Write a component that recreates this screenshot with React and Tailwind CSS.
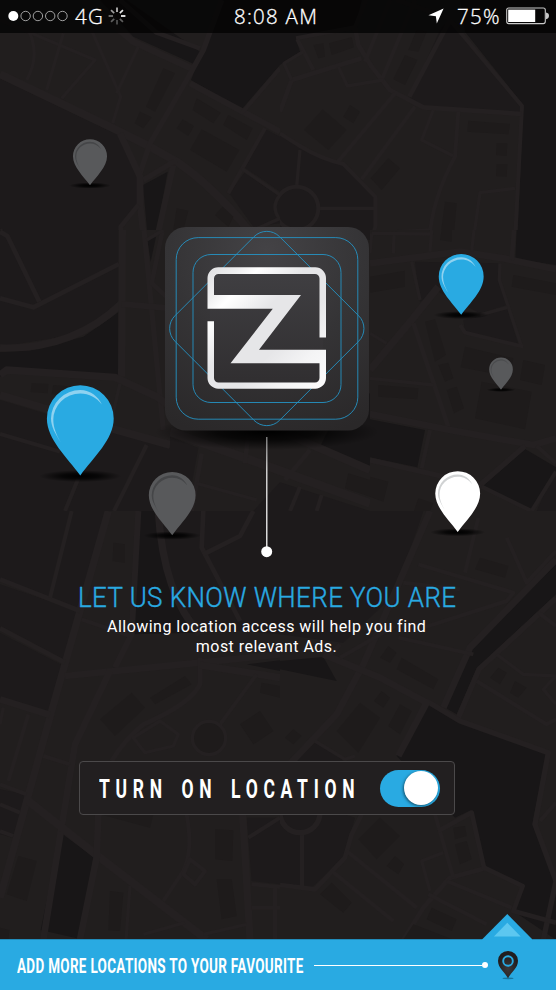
const DARK = "#1d1a1b";
const DEEP = "#181617";
const LOT = "#1e1b1b";
const BLOCK = "#211e1e";
const ROAD = "#242021";

// One rectangular sheet of the street map; its drawing units are thirds of a pixel.
function Sheet({ x, y, w, h, dark = [], deep = [], roads = [], lots = [], children }) {
  return (
    <svg x={x} y={y} width={w} height={h} viewBox={`0 0 ${w * 3} ${h * 3}`}>
      <rect width={w * 3} height={h * 3} fill={BLOCK} />
      {dark.map((p) => <polygon key={p} points={p} fill={DARK} />)}
      {deep.map((p) => <polygon key={p} points={p} fill={DEEP} />)}
      {roads.map(([width, d]) => (
        <path key={d} d={d} fill="none" stroke={ROAD} strokeWidth={width} strokeLinejoin="round" />
      ))}
      {lots.map((p) => <polygon key={p} points={p} fill={LOT} />)}
      {children}
    </svg>
  );
}

function StreetMap() {
  return (
    <>
      <Sheet
        x={0} y={0} w={280} h={240}
        dark={[
          "0,235 355,405 410,520 410,615 360,680 360,720 0,720",
          "798,388 840,410 840,575 735,503",
          "733,518 840,590 840,670 760,680 688,580",
        ]}
        deep={[
          "300,0 380,0 600,155 583,193 400,110",
          "668,0 840,0 840,195 725,328 573,240",
          "429,555 503,515 470,695 443,710",
        ]}
        roads={[
          [24, "M0 222 L350 390 L450 440 L530 485 Q640 560 745 690"],
          [20, "M250 0 L400 125 L580 208"],
          [14, "M360 0 L470 98 L600 145"],
          [16, "M665 0 L610 150 L560 240 L450 430 L420 520"],
          [18, "M570 250 L840 395"],
          [12, "M840 205 L725 340"],
          [10, "M0 60 L285 180 L185 295"],
          [10, "M190 100 L140 270"],
          [10, "M80 80 Q125 160 80 240"],
          [10, "M270 80 L362 290 L338 370"],
          [10, "M415 140 L350 280"],
          [12, "M795 385 L685 580"],
          [10, "M725 505 L840 585 Q810 620 840 660"],
          [20, "M360 400 L420 530 L420 610 L432 720"],
          [18, "M520 495 L470 720"],
          [14, "M415 615 L362 680 L362 720"],
          [16, "M430 540 L530 480"],
          [10, "M740 700 L840 655"],
          [12, "M0 690 L30 715"],
        ]}
        lots={[
          "490,205 525,220 465,335 438,320",
          "420,335 455,352 430,385 404,370",
          "590,295 662,338 640,370 578,330",
          "548,358 582,378 565,408 530,385",
          "605,388 718,450 680,515 570,450",
          "685,345 758,385 740,420 670,375",
          "530,625 565,632 550,690 520,690",
          "668,620 700,650 685,680 645,645",
        ]}
      />
      <Sheet
        x={280} y={0} w={276} h={240}
        dark={[
          "480,90 508,60 725,320 720,335 440,320 388,295",
          "0,405 55,440 130,475 190,495 285,590 285,720 0,720",
        ]}
        deep={[
          "0,0 245,0 225,85 48,118 60,155 0,195",
          "540,0 828,0 828,720 712,720 730,315 555,95",
        ]}
        roads={[
          [12, "M0 400 L60 438 Q120 475 190 492 L286 590 L286 680 L275 720"],
          [12, "M48 115 L225 82 L258 0"],
          [12, "M510 60 L726 318 L705 720"],
          [14, "M510 60 L388 290"],
          [14, "M225 80 L235 135 L275 200 L330 270 L430 322 L725 342"],
          [12, "M330 0 L255 185"],
          [12, "M405 0 L305 240"],
          [12, "M52 118 L100 210"],
          [14, "M0 335 L35 240 L245 175"],
          [10, "M35 240 L12 190 L70 155"],
          [12, "M345 280 L170 490"],
          [12, "M405 320 L245 538"],
          [10, "M175 200 L202 258 L310 240"],
          [10, "M460 330 L425 420 L520 468"],
          [12, "M535 335 L525 470 Q455 600 448 720"],
          [10, "M705 565 L600 578 L580 720"],
          [10, "M295 698 L450 690"],
          [10, "M60 450 L50 560 M115 625 L285 625"],
          [12, "M350 0 L510 55"],
        ]}
        lots={[
          "128,328 200,390 145,450 72,390",
          "210,315 240,335 220,370 190,350",
          "325,475 360,505 305,570 272,535",
          "565,362 690,372 685,403 562,395",
          "650,430 682,430 680,468 648,465",
          "650,492 682,492 680,530 648,528",
          "495,605 530,610 520,720 480,720",
          "100,135 130,130 135,170 115,175",
          "147,130 215,112 222,142 155,165",
          "375,165 412,180 375,255 340,238",
          "410,90 440,95 415,155 385,150",
        ]}
      >
        <circle cx="50" cy="625" r="65" fill={DARK} stroke={ROAD} strokeWidth="12" />
      </Sheet>
      <Sheet
        x={0} y={230} w={170} h={281}
        dark={[
          "0,0 357,0 357,215 250,310 0,350",
          "0,510 150,555 510,655 510,843 0,843",
        ]}
        deep={[
          "0,365 90,362 250,320 357,245 360,440 18,412 0,440",
          "442,30 468,20 452,95",
        ]}
        roads={[
          [22, "M0 354 Q220 360 365 220"],
          [22, "M367 0 L365 440"],
          [16, "M432 0 L490 600"],
          [18, "M365 222 L510 235"],
          [14, "M0 205 L100 232 L357 102"],
          [14, "M0 5 L22 18 L118 215"],
          [22, "M0 435 L20 420 L345 442 L470 500 L510 530"],
          [24, "M0 495 L150 540 L350 600 L510 645"],
          [12, "M0 612 L180 665"],
          [12, "M440 645 L342 843"],
          [12, "M235 745 L195 843"],
          [10, "M360 460 L330 590"],
          [14, "M488 0 L455 160 L510 210"],
          [10, "M440 30 L490 0"],
        ]}
        lots={["95,460 145,462 143,490 92,486", "160,465 220,470 200,500 155,492"]}
      />
      <Sheet
        x={170} y={240} w={200} h={271}
        dark={["0,590 85,623 50,813 0,813", "330,727 600,813 250,813"]}
        deep={["510,500 600,460 600,680 450,620"]}
        roads={[
          [26, "M0 575 L270 670 L600 790"],
          [14, "M95 640 L65 813"],
          [14, "M235 580 L225 670"],
          [14, "M420 630 L345 720"],
          [10, "M80 730 L260 780"],
          [12, "M390 740 L360 813 M455 765 L440 813"],
          [24, "M300 560 L600 690"],
        ]}
        lots={["535,700 600,720 600,770 525,745"]}
      />
      <Sheet
        x={370} y={230} w={186} h={281}
        dark={[
          "135,95 390,100 385,150 410,225 330,250 205,185 150,215",
          "280,270 412,238 445,342 285,305",
          "500,843 558,710 558,843",
        ]}
        deep={[
          "440,0 558,0 558,105 436,87",
          "0,568 165,600 142,712 0,682",
          "465,657 558,712 558,725 485,843 340,767",
        ]}
        roads={[
          [20, "M0 100 L270 65 L400 85 L558 118"],
          [22, "M205 170 L125 270 L0 420"],
          [14, "M130 280 L235 590"],
          [20, "M0 552 L240 600 L490 645 L558 625"],
          [16, "M0 690 L200 735 L330 765 L465 648"],
          [12, "M180 600 L155 715"],
          [10, "M125 95 L150 210"],
          [10, "M390 100 L388 150 L455 350"],
          [12, "M270 285 L285 308 L460 350"],
          [10, "M330 255 L412 232"],
          [10, "M0 445 L190 465"],
          [10, "M0 310 L50 340"],
          [10, "M5 10 L0 70 M72 10 L70 70 M185 0 L180 65 M312 0 L305 65"],
          [14, "M432 0 L425 90"],
          [12, "M335 770 L485 843"],
          [12, "M558 725 L485 843 M500 648 L558 700"],
          [10, "M5 10 L180 12"],
        ]}
        lots={[
          "0,140 105,122 105,170 0,188",
          "165,275 195,268 228,375 195,395",
          "205,405 235,398 250,445 225,455",
          "230,480 260,470 282,535 252,550",
          "25,465 145,475 142,508 25,500",
          "285,350 430,385 420,440 272,412",
          "335,455 485,485 465,598 315,565",
          "460,390 525,405 515,465 450,450",
          "430,135 558,160 558,195 425,170",
          "0,740 55,755 40,815 0,800",
          "145,805 190,820 180,843 132,843",
          "215,0 245,0 245,35 210,30",
        ]}
      />
      <Sheet
        x={0} y={511} w={280} h={429}
        dark={[
          "0,0 330,0 240,295 0,210",
          "0,220 235,300 195,450 0,360",
          "0,365 192,465 150,605 0,565",
          "475,0 840,0 840,370 600,350 520,250",
          "0,835 75,850 40,980 0,970",
          "740,920 840,920 840,1120 755,1110",
        ]}
        deep={[
          "415,0 470,0 485,130 555,300 580,365 400,370",
          "740,460 840,448 840,480",
          "182,965 280,1037 237,1283 122,1257",
        ]}
        roads={[
          [22, "M325 0 L240 300 L155 600 L0 1160"],
          [18, "M415 0 L395 370 L345 470"],
          [14, "M0 205 L240 300"],
          [14, "M0 352 L195 455"],
          [12, "M215 0 L150 260"],
          [20, "M0 565 L150 612"],
          [22, "M475 0 Q490 250 600 370"],
          [14, "M610 0 L605 110 L720 330"],
          [14, "M610 130 L720 75 L760 0"],
          [20, "M195 495 L600 455 L840 430"],
          [20, "M330 480 L225 700 L130 1286"],
          [12, "M245 325 L390 375"],
          [14, "M600 440 L600 520 Q570 580 430 640 Q370 690 335 750"],
          [22, "M600 462 L840 500"],
          [10, "M480 630 L400 680 L435 725 L520 705 L535 670 Z"],
          [12, "M770 490 L660 640"],
          [24, "M85 870 L300 1040 L620 1286"],
          [12, "M130 735 L210 760"],
          [12, "M85 610 L25 810"],
          [10, "M10 590 L0 640"],
          [12, "M0 820 L80 850 M0 880 L60 905 M0 960 L40 975"],
          [20, "M295 910 L290 1040 L240 1286"],
          [12, "M560 910 Q580 1020 550 1080 L490 1170"],
          [12, "M570 1045 L615 1080 L585 1120 L550 1090 Z"],
          [22, "M728 910 L750 1286"],
          [12, "M745 980 L840 920"],
          [12, "M755 1120 L840 1128 M755 1190 L840 1190 M825 1130 L825 1286"],
          [10, "M390 1125 L378 1286 M430 1270 L555 1235 M610 1270 L740 1240"],
        ]}
        lots={[
          "395,545 435,590 345,675 300,625",
          "555,495 575,520 465,580 450,560",
          "780,600 820,660 760,700 720,640",
          "785,515 840,525 840,560 780,545",
          "55,1035 110,1050 80,1170 20,1150",
          "645,955 700,958 697,1050 645,1045",
          "650,1105 695,1105 710,1215 665,1225",
          "330,1140 370,1145 360,1260 325,1258",
          "340,95 375,100 375,155 338,150",
          "0,1250 28,1257 25,1286 0,1286",
          "300,910 460,910 450,950",
        ]}
      >
        <circle cx="627" cy="681" r="50" fill={LOT} stroke={ROAD} strokeWidth="10" />
      </Sheet>
      <Sheet
        x={280} y={511} w={276} h={429}
        dark={[
          "0,0 430,0 345,250 190,395 0,370",
          "0,800 105,695 190,745 100,880 225,920 190,1040 95,1130 0,1115",
        ]}
        deep={[
          "828,160 828,250 590,472 530,610 492,588 572,412",
          "445,580 530,625 800,720 757,940 828,1110 828,1286 700,1200 725,1125 610,1070 572,898 525,920 350,735",
          "0,450 130,438 170,510 0,475",
        ]}
        roads={[
          [20, "M450 0 L355 220 L250 460 L170 610 L0 790"],
          [20, "M828 145 L570 410 L490 590"],
          [16, "M828 262 L597 475 L535 620"],
          [16, "M440 570 L540 630 L805 725 L765 940 L828 1110 L790 1286"],
          [20, "M130 430 L300 500 L440 575 L355 735"],
          [12, "M180 440 L345 345 M150 430 L180 400"],
          [12, "M415 160 L700 245 L680 270 L430 350"],
          [12, "M370 215 L540 235"],
          [12, "M595 20 L555 185"],
          [12, "M680 80 L740 215 L828 120"],
          [12, "M590 510 L800 640 L828 625"],
          [10, "M650 430 L730 490 L828 495 L790 535 L828 580"],
          [12, "M355 380 L580 430"],
          [12, "M775 305 L828 345"],
          [10, "M105 690 L195 745 L225 735"],
          [14, "M0 1122 L105 1135 L195 1040 L215 970 L245 910"],
          [12, "M200 1020 L410 1190"],
          [12, "M155 1080 L340 1230"],
          [12, "M66 970 L66 1125"],
          [14, "M620 1070 L510 1100 L430 1190 L370 1286"],
          [12, "M500 1110 L695 1190"],
          [12, "M445 1150 L620 1240"],
          [12, "M465 910 L520 1100"],
          [10, "M450 1140 L425 1050 L490 1025"],
          [14, "M475 960 L575 905 L612 1070 L728 1125 L700 1200 L828 1235"],
          [12, "M780 930 L828 875"],
        ]}
        lots={[
          "240,575 300,620 235,725 170,660",
          "305,540 330,560 310,590 282,570",
          "360,580 395,600 360,670 325,645",
          "365,440 475,505 460,535 350,475",
          "325,405 350,425 330,455 300,440",
          "600,140 685,165 675,200 585,175",
          "655,470 680,485 660,520 630,500",
          "705,510 740,530 715,560 690,545",
          "300,920 360,975 290,1045 235,985",
          "345,1035 372,1060 355,1090 320,1065",
          "520,950 555,945 560,975 525,985",
          "525,1000 560,990 575,1045 540,1060",
          "155,1115 215,1175 190,1205 120,1150",
          "455,1190 530,1225 515,1260 440,1225",
          "400,1240 520,1286 370,1286",
          "40,655 65,675 40,700 15,680",
        ]}
      >
        <circle cx="60" cy="905" r="60" fill={DARK} stroke={ROAD} strokeWidth="16" />
      </Sheet>
    </>
  );
}

const pins = [
  { x: 90, y: 156.2, s: 0.51, fill: "#58595b", shine: "#454648" },
  { x: 461.2, y: 276.4, s: 0.672, fill: "#29aae2", shine: "#8fd2f0" },
  { x: 501, y: 369.4, s: 0.355, fill: "#58595b", shine: "#4b4c4e" },
  { x: 80.3, y: 418.6, s: 1, fill: "#29aae2", shine: "#8fd2f0" },
  { x: 172.2, y: 495.3, s: 0.7, fill: "#58595b", shine: "#454648" },
  { x: 457.7, y: 493.6, s: 0.672, fill: "#ffffff", shine: "#d0d2d3" },
];

function MapCanvas() {
  return (
    <svg className="absolute inset-0" width="556" height="990" viewBox="0 0 556 990" aria-hidden="true">
      <defs>
        <radialGradient id="shade">
          <stop offset="0" stopColor="#000" />
          <stop offset="0.45" stopColor="#000" stopOpacity="0.75" />
          <stop offset="1" stopColor="#000" stopOpacity="0" />
        </radialGradient>
      </defs>
      <StreetMap />
      {pins.map((p) => (
        <g key={p.x} transform={`translate(${p.x} ${p.y}) scale(${p.s})`}>
          <ellipse cy="57.5" rx="41" ry="6" fill="url(#shade)" />
          <path d="M0 57C-13 39-33.4 21-33.4 0A33.4 33.4 0 0 1 33.4 0C33.4 21 13 39 0 57Z" fill={p.fill} />
          <path
            d="M-19.5 24C-25 15-29.3 8-29.3 0A29.3 28.5 0 0 1 0-28.5C10-28.5 18-22 21.5-14C16-21 9-25 0-25A27 26 0 0 0-27 1C-27 9-24 16-19.5 24Z"
            fill={p.shine}
          />
        </g>
      ))}
      <ellipse cx="267" cy="432" rx="112" ry="18" fill="url(#shade)" />
    </svg>
  );
}

function Spinner() {
  const rays = [0.75, 0.9, 1, 0.35, 0.3, 0.35, 0.45, 0.6];
  return (
    <svg className="ml-[4px]" width="18" height="18" viewBox="-9 -9 18 18">
      {rays.map((o, i) => (
        <line key={i} y1="-4" y2="-8.4" stroke="#fff" strokeWidth="1.7" opacity={o} transform={`rotate(${i * 45})`} />
      ))}
    </svg>
  );
}

function StatusBar() {
  return (
    <header className="flex h-[33px] items-center bg-black/70 pb-px font-['Open_Sans',sans-serif] text-[20.5px] leading-none font-light text-white [-webkit-text-stroke:0.3px_white]">
      <div className="flex w-[234px] items-center pl-2">
        <svg width="61" height="12" viewBox="0 0 61 12">
          <circle cx="5.3" cy="6" r="5" fill="#fff" />
          {[17.6, 29.9, 42.2, 54.5].map((x) => (
            <circle key={x} cx={x} cy="6" r="4.7" fill="none" stroke="#c4c4c4" strokeWidth="0.8" />
          ))}
        </svg>
        <span className="ml-[6px] tracking-[1.3px]">4G</span>
        <Spinner />
      </div>
      <span className="w-[190px] tracking-[1.25px]">8:08 AM</span>
      <svg className="ml-[4px]" width="16" height="16" viewBox="0 0 16 16">
        <path d="M15.6 0.6L8.8 15.4L7.9 8.2L0.4 7.3Z" fill="#fff" />
      </svg>
      <span className="ml-[13px] w-[49px] tracking-[1.3px]">75%</span>
      <svg width="44" height="18" viewBox="0 0 44 18">
        <rect x="0.7" y="1" width="38.6" height="15.6" rx="2" fill="none" stroke="#c8c8c8" strokeWidth="1.1" />
        <rect x="2.2" y="2.6" width="27" height="12.4" fill="#fff" />
        <path d="M40 5.5Q43 6 43 8.8Q43 11.6 40 12.2Z" fill="#c8c8c8" />
      </svg>
    </header>
  );
}

function Logo() {
  return (
    <svg className="mt-[194px] ml-[165px] shrink-0" width="204" height="331" viewBox="165 227 204 331">
      <defs>
        <radialGradient id="tile" cx="0.5" cy="0.12" r="0.95">
          <stop offset="0" stopColor="#444346" />
          <stop offset="0.5" stopColor="#353436" />
          <stop offset="1" stopColor="#2a2829" />
        </radialGradient>
        <linearGradient id="face" x1="0" y1="0" x2="0" y2="1">
          <stop offset="0" stopColor="#403f42" />
          <stop offset="1" stopColor="#302e30" />
        </linearGradient>
        <linearGradient id="metal" x1="0" y1="0" x2="1" y2="1">
          <stop offset="0" stopColor="#dfdfe1" />
          <stop offset="0.14" stopColor="#f0f0f1" />
          <stop offset="0.22" stopColor="#ffffff" />
          <stop offset="0.42" stopColor="#e6e6e8" />
          <stop offset="0.62" stopColor="#e6e6e8" />
          <stop offset="0.8" stopColor="#f4f4f5" />
          <stop offset="1" stopColor="#fdfdfd" />
        </linearGradient>
        <linearGradient id="stem" x1="0" y1="0" x2="0" y2="1">
          <stop offset="0" stopColor="#777" />
          <stop offset="0.3" stopColor="#ccc" />
          <stop offset="1" stopColor="#ddd" />
        </linearGradient>
      </defs>
      <rect x="165" y="227" width="204" height="203.5" rx="21" fill="url(#tile)" />
      <g fill="none" stroke="#2593c4" strokeWidth="0.9">
        <rect x="176.2" y="237.6" width="181.6" height="181.6" rx="22" />
        <rect x="193" y="254.5" width="148" height="148" rx="18" />
        <path d="M254.1 236.6A18 18 0 0 1 279.5 236.6L358.7 315.8A18 18 0 0 1 358.7 341.2L279.5 420.4A18 18 0 0 1 254.1 420.4L174.9 341.2A18 18 0 0 1 174.9 315.8Z" />
      </g>
      <rect x="210" y="270" width="113" height="116" rx="7" fill="url(#face)" />
      <path
        d="M207.5 308.7V278A10.7 10.7 0 0 1 218.2 267.3H315.3A10.7 10.7 0 0 1 326 278V337.5H319.5V278.5A4.5 4.5 0 0 0 315 274H218.5A4.5 4.5 0 0 0 214 278.5V295H301L259 349.7H326V378A10.7 10.7 0 0 1 315.3 388.7H218.2A10.7 10.7 0 0 1 207.5 378V321.3H214V378A4.5 4.5 0 0 0 218.5 382.5H315A4.5 4.5 0 0 0 319.5 378V363.3H230.5L272.8 308.7Z"
        fill="url(#metal)"
      />
      <rect x="266" y="437" width="1.5" height="111" fill="url(#stem)" />
      <circle cx="266.7" cy="551.7" r="5.5" fill="#fff" />
    </svg>
  );
}

export default function App() {
  return (
    <div className="relative h-[990px] w-[556px] overflow-hidden bg-[#211f1f] font-['Roboto',sans-serif]">
      <MapCanvas />
      <div className="relative flex h-full flex-col">
        <StatusBar />
        <main className="flex flex-1 flex-col">
          <Logo />
          <h1 className="mt-[24px] ml-[78px] w-max origin-left scale-x-[0.96] text-[27px] leading-[32px] font-light tracking-[0.44px] whitespace-nowrap text-[#29aae2] [-webkit-text-stroke:0.4px_#29aae2]">
            LET US KNOW WHERE YOU ARE
          </h1>
          <p className="mt-[3px] ml-[107px] w-[319px] text-center text-[16px] leading-[20px] tracking-[0.47px] whitespace-nowrap text-white">
            Allowing location access will help you find
            <br />
            most relevant Ads.
          </p>
          <div className="mt-[104px] ml-[79px] flex h-[54px] w-[376px] items-center rounded-[4px] border border-[#4b494a] bg-[#221f20]">
            <span className="ml-[19px] w-[281px] pt-[3px] text-white">
              <span className="block w-max origin-left scale-x-[0.7] text-[25px] leading-none font-bold tracking-[8.2px] whitespace-nowrap [word-spacing:5px]">
                TURN ON LOCATION
              </span>
            </span>
            <button
              type="button"
              role="switch"
              aria-checked="true"
              aria-label="Location"
              className="flex h-[37px] w-[60px] shrink-0 items-center justify-end rounded-full bg-[#29aae2] pr-[2px]"
            >
              <span className="size-[34px] rounded-full bg-white shadow-[-1px_1px_3px_rgba(0,0,0,0.5)]" />
            </button>
          </div>
        </main>
        <svg className="relative z-10 -mb-[2px] ml-[482px] shrink-0" width="50" height="27" viewBox="482 914 50 27">
          <path d="M507.3 914L533 940V941H481.6V940Z" fill="#29aae2" />
          <path d="M507.3 922.7L520.7 936.5H493.9Z" fill="#5cc7f0" />
        </svg>
        <footer className="flex h-[51px] shrink-0 items-center border-t border-[#218bb9] bg-[#29aae2] text-white">
          <span className="ml-[17px] w-[297px] pt-[2px]">
            <span className="block w-max origin-left scale-x-[0.675] text-[20px] leading-none font-bold tracking-[0.45px] whitespace-nowrap">
              ADD MORE LOCATIONS TO YOUR FAVOURITE
            </span>
          </span>
          <span className="h-px w-[168px] bg-white" />
          <span className="size-[6px] rounded-full bg-white" />
          <svg className="ml-[9px]" width="22" height="30" viewBox="0 0 22 30">
            <defs>
              <radialGradient id="dot" cx="0.5" cy="0.65" r="0.5">
                <stop offset="0" stopColor="#3b3839" />
                <stop offset="1" stopColor="#211e1f" />
              </radialGradient>
            </defs>
            <ellipse cx="11" cy="28.3" rx="5.5" ry="0.9" fill="#17779f" />
            <path d="M11 28.2C7.5 22 1 18 1 10.8A10 9.8 0 0 1 21 10.8C21 18 14.5 22 11 28.2Z" fill="url(#dot)" />
            <circle cx="11" cy="11" r="4.8" fill="none" stroke="#29aae2" strokeWidth="1.9" />
          </svg>
        </footer>
      </div>
    </div>
  );
}
